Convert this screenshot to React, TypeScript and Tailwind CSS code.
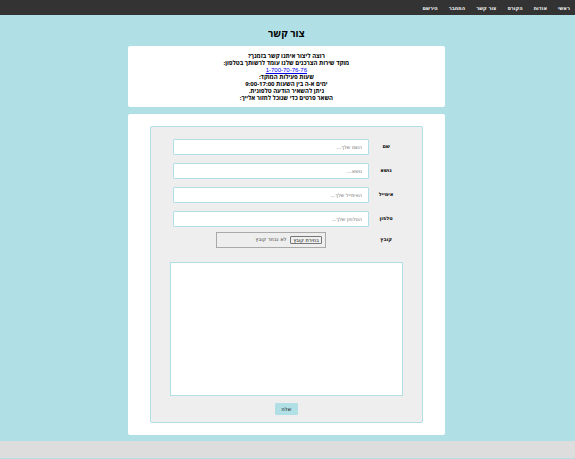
import React from "react";

const links = ["ראשי", "אודות", "הקורס", "צור קשר", "התחבר", "הירשם"];

const fields = [
  { id: "name", label: "שם", placeholder: "השם שלך...", type: "text" },
  { id: "subject", label: "נושא", placeholder: "נושא...", type: "text" },
  { id: "email", label: "אימייל", placeholder: "האימייל שלך...", type: "email" },
  { id: "phone", label: "טלפון", placeholder: "הטלפון שלך...", type: "tel" },
];

function NavBar() {
  return (
    <nav className="flex h-[15px] items-center gap-[11px] bg-[#333] px-[5px] text-[5px] leading-[8px] font-bold text-[#f2f2f2]">
      {links.map((text) => (
        <a key={text} href="#" className="whitespace-nowrap">
          {text}
        </a>
      ))}
    </nav>
  );
}

function ContactInfo() {
  return (
    <section className="rounded-[2px] bg-white pt-[7px] pb-[5px] text-center font-['Open_Sans',sans-serif] text-[6px] leading-[7px] font-bold">
      <p>רוצה ליצור איתנו קשר בזמנך?</p>
      <p>מוקד שירות הצרכנים שלנו עומד לרשותך בטלפון:</p>
      <p>
        <a
          href="tel:1-700-70-76-76"
          className="font-['Liberation_Sans',sans-serif] font-normal text-[#0000ee] underline"
        >
          1-700-70-76-76
        </a>
      </p>
      <p>שעות פעילות המוקד:</p>
      <p>ימים א-ה בין השעות 9:00-17:00</p>
      <p>ניתן להשאיר הודעה טלפונית.</p>
      <p>השאר פרטים כדי שנוכל לחזור אלייך:</p>
    </section>
  );
}

function ContactForm() {
  return (
    <form className="flex flex-col rounded-[2px] border border-[#b0e0e6] bg-[#eee] px-[19px] pt-3 pb-[7px]">
      <div className="flex flex-col gap-2">
        {fields.map((f) => (
          <div key={f.id} className="flex items-start">
            <label htmlFor={f.id} className="w-[34px] text-center text-[5px] leading-[14px] font-bold">
              {f.label}
            </label>
            <input
              id={f.id}
              type={f.type}
              dir="rtl"
              placeholder={f.placeholder}
              className="ml-[3px] h-4 min-w-0 flex-1 rounded-[1px] border border-[#b0e0e6] bg-white px-[6px] text-right text-[5px] outline-none placeholder:text-[#757575]"
            />
          </div>
        ))}
      </div>
      <div className="mt-[5px] flex items-start">
        <label htmlFor="file" className="w-[34px] text-center text-[5px] leading-[14px] font-bold">
          קובץ
        </label>
        <div className="ml-[3px] flex flex-1 justify-center">
          <label className="relative flex h-4 w-[110px] items-center gap-1 border border-[#a9a9a9] px-[3px] text-[5px] text-[#333]">
            <input id="file" type="file" className="sr-only" />
            <span className="rounded-[1px] border border-[#767676] bg-[#efefef] px-[2px] leading-[6px] whitespace-nowrap text-black">
              בחירת קובץ
            </span>
            <span className="whitespace-nowrap">לא נבחר קובץ</span>
          </label>
        </div>
      </div>
      <textarea
        aria-label="הודעה"
        className="mt-[14px] block h-[134px] w-full resize-none border border-[#b0e0e6] bg-white p-1 text-[5px] outline-none"
      />
      <button
        type="submit"
        className="mt-[7px] h-3 self-center rounded-[1px] bg-[#b0e0e6] px-[7px] text-[5px] leading-[8px] text-black"
      >
        שלח
      </button>
    </form>
  );
}

export default function App() {
  return (
    <div
      dir="rtl"
      className="min-h-screen bg-[#b0e0e6] font-['DejaVu_Sans','Liberation_Sans',sans-serif] text-black"
    >
      <NavBar />
      <main className="mr-[22.6%] flex w-[55.2%] flex-col pb-[6px]">
        <h1 className="pt-[11px] pb-[6px] text-center font-['Open_Sans',sans-serif] text-[10px] leading-[14px] font-bold">
          צור קשר
        </h1>
        <ContactInfo />
        <div className="mt-[7px] rounded-[2px] bg-white px-[22px] py-3">
          <ContactForm />
        </div>
      </main>
      <footer className="h-[17px] bg-[#ddd]" />
    </div>
  );
}
